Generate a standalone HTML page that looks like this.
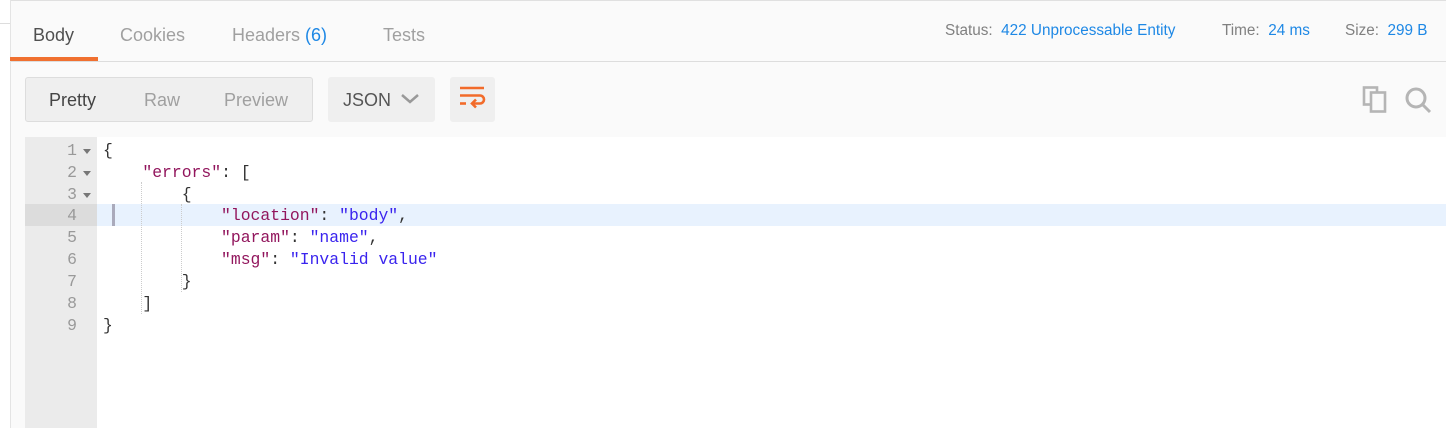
<!DOCTYPE html>
<html><head><style>
body{margin:0;width:1446px;height:428px;overflow:hidden;background:#fafafa;font-family:"Liberation Sans",sans-serif;position:relative}
.abs{position:absolute}
.tab{position:absolute;top:25px;font-size:18px;color:#a0a0a0}
.stat{position:absolute;top:22px;font-size:15.3px;color:#808080}
.stat b{font-weight:normal;color:#1e88e5}
.code{position:absolute;left:97px;top:137px;right:0;bottom:0;background:#fff}
.gut{position:absolute;left:25px;top:137px;width:72px;bottom:0;background:#ebebeb}
.ln{position:absolute;left:0;width:52px;text-align:right;font:16.4px "Liberation Mono",monospace;color:#999;line-height:22px}
.cl{position:absolute;left:6px;font:16.4px "Liberation Mono",monospace;color:#333;line-height:22px;white-space:pre}
.k{color:#92165d}.s{color:#3a24ee}
.arr{position:absolute;left:58px;width:0;height:0;border-left:4px solid transparent;border-right:4px solid transparent;border-top:5px solid #777}
</style></head><body>
<div class="abs" style="left:0;top:0;width:10px;height:428px;background:#fff"></div>
<div class="abs" style="left:0;top:23px;width:10px;height:1px;background:#ddd"></div>
<div class="abs" style="left:10px;top:0;width:1px;height:428px;background:#e4e4e4"></div>
<div class="abs" style="left:11px;top:0;width:1435px;height:1px;background:#e0e0e0"></div>
<div class="tab" style="left:33px;color:#505050">Body</div>
<div class="tab" style="left:120px">Cookies</div>
<div class="tab" style="left:232px">Headers <span style="color:#1e88e5">(6)</span></div>
<div class="tab" style="left:383px">Tests</div>
<div class="abs" style="left:11px;top:61px;width:1435px;height:1px;background:#ddd"></div>
<div class="abs" style="left:10px;top:57px;width:88px;height:4px;background:#f07030"></div>
<div class="stat" style="left:945px">Status:&nbsp; <b>422 Unprocessable Entity</b></div>
<div class="stat" style="left:1222px">Time:&nbsp; <b>24 ms</b></div>
<div class="stat" style="left:1345px">Size:&nbsp; <b>299 B</b></div>
<div class="abs" style="left:25px;top:77px;width:286px;height:43px;background:#efefef;border:1px solid #ddd;border-radius:3px"></div>
<div class="abs" style="left:49px;top:90px;font-size:18px;color:#444">Pretty</div>
<div class="abs" style="left:144px;top:90px;font-size:18px;color:#a0a0a0">Raw</div>
<div class="abs" style="left:224px;top:90px;font-size:18px;color:#a0a0a0">Preview</div>
<div class="abs" style="left:328px;top:77px;width:107px;height:45px;background:#efefef;border-radius:3px"></div>
<div class="abs" style="left:343px;top:90px;font-size:18px;color:#555">JSON</div>
<svg class="abs" style="left:400px;top:93px" width="20" height="12"><path d="M2 2 L10 9 L18 2" fill="none" stroke="#999" stroke-width="2.5"/></svg>
<div class="abs" style="left:450px;top:77px;width:45px;height:45px;background:#efefef;border-radius:3px"></div>
<svg class="abs" style="left:458px;top:86px" width="28" height="26"><g stroke="#f26b2a" stroke-width="2.6" fill="none"><path d="M2 2H26"/><path d="M2 9.5H22a4 4 0 0 1 0 8H15"/><path d="M2 17.5H8"/><path d="M18 13.5L14 17.5L18 21.5"/></g></svg>
<svg class="abs" style="left:1360px;top:84px" width="32" height="32"><g stroke="#b5b5b5" stroke-width="2.6" fill="none"><rect x="4" y="3.5" width="13" height="17"/><rect x="11" y="8.5" width="14" height="19" fill="#fafafa"/></g></svg>
<svg class="abs" style="left:1402px;top:84px" width="32" height="32"><g stroke="#b5b5b5" stroke-width="3" fill="none"><circle cx="14" cy="14" r="9"/><path d="M21 21L28 28"/></g></svg>
<div class="abs" style="left:25px;top:137px;width:1421px;height:1px;background:#ddd"></div>
<div class="code">
<div class="abs" style="left:0;right:0;top:67px;height:22px;background:#e8f2fe"></div>
<div class="abs" style="left:15px;top:67px;width:3px;height:22px;background:#aab"></div>
<div class="abs" style="left:44px;top:45px;height:132px;border-left:1px dotted #ccc"></div>
<div class="abs" style="left:84px;top:67px;height:88px;border-left:1px dotted #ccc"></div>
<div class="cl" style="top:3px">{</div>
<div class="cl" style="top:25px">    <span class="k">"errors"</span>: [</div>
<div class="cl" style="top:47px">        {</div>
<div class="cl" style="top:68px">            <span class="k">"location"</span>: <span class="s">"body"</span>,</div>
<div class="cl" style="top:90px">            <span class="k">"param"</span>: <span class="s">"name"</span>,</div>
<div class="cl" style="top:112px">            <span class="k">"msg"</span>: <span class="s">"Invalid value"</span></div>
<div class="cl" style="top:134px">        }</div>
<div class="cl" style="top:156px">    ]</div>
<div class="cl" style="top:178px">}</div>
</div>
<div class="gut">
<div class="abs" style="left:0;right:0;top:67px;height:22px;background:#dcdcdc"></div>
<div class="ln" style="top:3px">1</div><div class="arr" style="top:12px"></div>
<div class="ln" style="top:25px">2</div><div class="arr" style="top:34px"></div>
<div class="ln" style="top:47px">3</div><div class="arr" style="top:56px"></div>
<div class="ln" style="top:68px">4</div>
<div class="ln" style="top:90px">5</div>
<div class="ln" style="top:112px">6</div>
<div class="ln" style="top:134px">7</div>
<div class="ln" style="top:156px">8</div>
<div class="ln" style="top:178px">9</div>
</div>
</body></html>
